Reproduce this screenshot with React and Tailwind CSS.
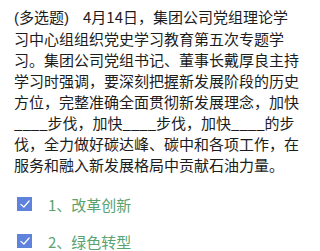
import React from 'react';

const lines = [
  null,
  '习中心组组织党史学习教育第五次专题学',
  '习。集团公司党组书记、董事长戴厚良主持',
  '学习时强调，要深刻把握新发展阶段的历史',
  '方位，完整准确全面贯彻新发展理念，加快',
  '____步伐，加快____步伐，加快____的步',
  '伐，全力做好碳达峰、碳中和各项工作，在',
  '服务和融入新发展格局中贡献石油力量。',
];

const options = ['1、改革创新', '2、绿色转型'];

function CheckBox() {
  return (
    <div className="flex h-[14px] w-[15px] items-center justify-center bg-[#5f83dc]">
      <svg viewBox="0 0 16 16" className="h-[12px] w-[12px]" fill="none">
        <path d="M2.5 8.5 L6.5 12 L13.5 4" stroke="#fff" strokeWidth="1.6" strokeLinecap="round" strokeLinejoin="round" />
      </svg>
    </div>
  );
}

export default function App() {
  return (
    <div className="h-[251px] w-[314px] overflow-hidden bg-white font-['Noto_Sans_CJK_SC',sans-serif]">
      <div className="px-[14px] pt-[6px] text-[15px] leading-[21px] text-[#1c1c1c]">
        {lines.map((line, i) =>
          i === 0 ? (
            <div key={i} className="whitespace-nowrap">
              <span className="font-['Liberation_Sans','Noto_Sans_CJK_SC',sans-serif]">(</span>多选题<span className="font-['Liberation_Sans','Noto_Sans_CJK_SC',sans-serif]">)</span>
              <span className="ml-[14px]">4月14日，集团公司党组理论学</span>
            </div>
          ) : (
            <div key={i} className="whitespace-nowrap">{line}</div>
          )
        )}
      </div>

      <div className="mt-[22px] flex flex-col gap-[23px] pl-[17px]">
        {options.map((opt) => (
          <div key={opt} className="flex h-[14px] items-center">
            <CheckBox />
            <span className="ml-[16px] text-[15px] leading-none text-[#5aa36f]">{opt}</span>
          </div>
        ))}
      </div>
    </div>
  );
}
